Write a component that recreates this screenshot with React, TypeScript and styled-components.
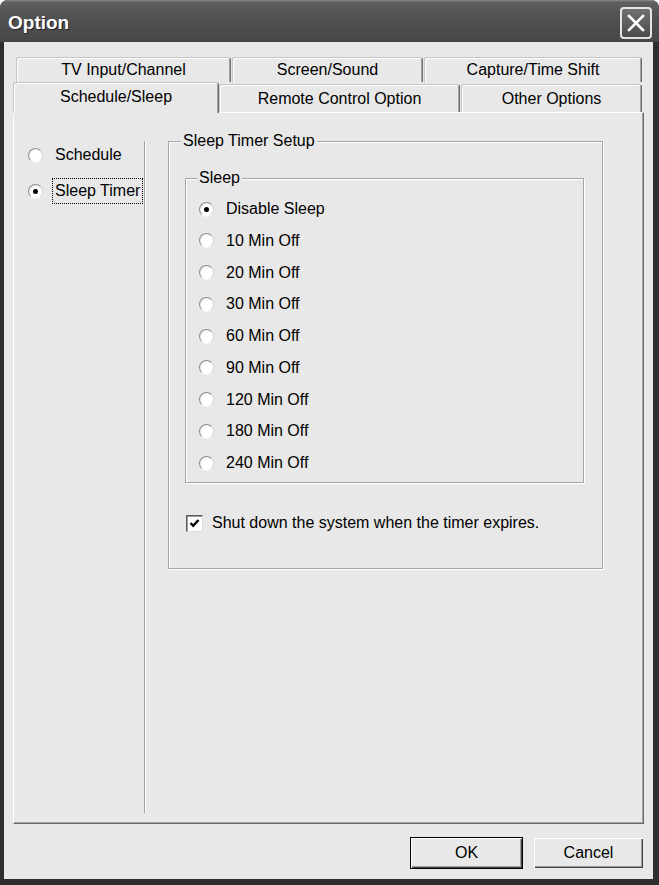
import styled, { createGlobalStyle } from "styled-components";

const FONT = `"Liberation Sans", Arial, sans-serif`;

const GlobalStyle = createGlobalStyle`
  html, body {
    margin: 0;
    padding: 0;
    background: #fff;
  }
  body {
    font-family: ${FONT};
    font-size: 16px;
    color: #000;
  }
  * {
    box-sizing: border-box;
  }
`;

const sleepOptions = [
  "Disable Sleep",
  "10 Min Off",
  "20 Min Off",
  "30 Min Off",
  "60 Min Off",
  "90 Min Off",
  "120 Min Off",
  "180 Min Off",
  "240 Min Off",
];

export default function App() {
  return (
    <>
      <GlobalStyle />
      <Window>
        <TitleBar>
          <Title>Option</Title>
          <CloseButton>
            <svg width="18" height="18" viewBox="0 0 18 18">
              <path
                d="M2 2 L16 16 M16 2 L2 16"
                stroke="#fff"
                strokeWidth="2.6"
                strokeLinecap="square"
              />
            </svg>
          </CloseButton>
        </TitleBar>
        <Frame>
          <Client>
            <BackRow>
              <Tab $w={215} $back>
                TV Input/Channel
              </Tab>
              <Tab $w={191} $back>
                Screen/Sound
              </Tab>
              <Tab $w={218} $back>
                Capture/Time Shift
              </Tab>
            </BackRow>
            <FrontRow>
              <Tab $w={206} $selected>
                Schedule/Sleep
              </Tab>
              <Tab $w={241}>Remote Control Option</Tab>
              <Tab $w={181}>Other Options</Tab>
            </FrontRow>
            <Panel>
              <SideList>
                <Option>
                  <Radio />
                  <Label>Schedule</Label>
                </Option>
                <Option>
                  <Radio $on />
                  <Label $focus>Sleep Timer</Label>
                </Option>
              </SideList>
              <Group $w={435} $h={428} $pt={36} $pl={16} $ml={23} $mt={28}>
                <Legend $left={12}>Sleep Timer Setup</Legend>
                <Group $w={399} $h={305} $pt={18} $pl={13}>
                  <Legend $left={11}>Sleep</Legend>
                  <RadioList>
                    {sleepOptions.map((label, i) => (
                      <Option key={label}>
                        <Radio $on={i === 0} />
                        <Label>{label}</Label>
                      </Option>
                    ))}
                  </RadioList>
                </Group>
                <CheckRow>
                  <CheckBox>
                    <svg width="11" height="11" viewBox="0 0 11 11">
                      <path
                        d="M1.5 5 L4.2 7.8 L9.5 2"
                        stroke="#000"
                        strokeWidth="2.4"
                        fill="none"
                      />
                    </svg>
                  </CheckBox>
                  <span>Shut down the system when the timer expires.</span>
                </CheckRow>
              </Group>
            </Panel>
            <Footer>
              <Button $w={113} $default>
                OK
              </Button>
              <Button $w={111}>Cancel</Button>
            </Footer>
          </Client>
        </Frame>
      </Window>
    </>
  );
}

const Window = styled.div`
  width: 659px;
  height: 885px;
  display: flex;
  flex-direction: column;
  background: #2e2e2e;
  border-radius: 8px 8px 0 0;
  overflow: hidden;
`;

const TitleBar = styled.div`
  height: 42px;
  flex: none;
  display: flex;
  justify-content: space-between;
  align-items: flex-start;
  padding: 0 7px 0 8px;
  background: linear-gradient(#8c8c8c 0, #616161 2px, #545454 12px, #474747 100%);
`;

const Title = styled.span`
  margin-top: 12px;
  font: bold 19px/22px ${FONT};
  color: #fff;
  text-shadow: 1px 1px 0 #1e1e1e;
`;

const CloseButton = styled.div`
  margin-top: 7px;
  width: 32px;
  height: 32px;
  display: flex;
  align-items: center;
  justify-content: center;
  border: 2px solid #e4e4e4;
  border-radius: 4px;
  background: linear-gradient(#707070, #4c4c4c);
`;

const Frame = styled.div`
  flex: 1;
  display: flex;
  padding: 0 6px 6px 4px;
`;

const Client = styled.div`
  flex: 1;
  display: flex;
  flex-direction: column;
  padding: 15px 9px 0 9px;
  background: #e8e8e8;
`;

const BackRow = styled.div`
  height: 25px;
  display: flex;
  align-items: flex-start;
  gap: 1px;
  padding-left: 3px;
`;

const FrontRow = styled.div`
  height: 30px;
  display: flex;
  align-items: flex-start;
  position: relative;
  z-index: 1;
`;

const Tab = styled.div<{ $w: number; $selected?: boolean; $back?: boolean }>`
  width: ${(p) => p.$w}px;
  height: ${(p) => (p.$selected ? 31 : p.$back ? 25 : 28)}px;
  margin-top: ${(p) => (p.$selected || p.$back ? 0 : 2)}px;
  margin-bottom: ${(p) => (p.$selected ? -1 : 0)}px;
  margin-right: ${(p) => (p.$selected || p.$back ? 0 : 1)}px;
  display: flex;
  align-items: center;
  justify-content: center;
  padding-bottom: ${(p) => (p.$selected ? 3 : p.$back ? 1 : 0)}px;
  background: #e8e8e8;
  border-top: 1px solid #c4c4c4;
  border-left: 1px solid #c4c4c4;
  border-right: 1px solid #6c6c6c;
  border-radius: 3px 3px 0 0;
  box-shadow: inset 1px 1px 0 #fff, inset -1px 0 0 #a2a2a2;
  font-size: 16px;
  line-height: 20px;
  white-space: nowrap;
`;

const Panel = styled.div`
  height: 712px;
  flex: none;
  display: flex;
  align-items: flex-start;
  border-top: 1px solid #fff;
  border-left: 1px solid #fff;
  border-right: 1px solid #6a6a6a;
  border-bottom: 1px solid #6a6a6a;
  box-shadow: inset -1px -1px 0 #a4a4a4;
`;

const SideList = styled.div`
  width: 131px;
  align-self: stretch;
  margin: 28px 0 10px 0;
  padding: 2px 0 0 14px;
  display: flex;
  flex-direction: column;
  gap: 12px;
  border-right: 1px solid #a0a0a0;
  box-shadow: 1px 0 0 #fff;
`;

const Option = styled.div`
  height: 24px;
  display: flex;
  align-items: center;
  gap: 10px;
  white-space: nowrap;
`;

const Radio = styled.span<{ $on?: boolean }>`
  width: 15px;
  height: 15px;
  flex: none;
  display: flex;
  align-items: center;
  justify-content: center;
  border-radius: 50%;
  border: 1px solid;
  border-color: #8e8e8e #d6d6d6 #f6f6f6 #8e8e8e;
  background: radial-gradient(circle at 60% 60%, #fff 50%, #e2e2e2 100%);

  &::after {
    content: "";
    width: 5px;
    height: 5px;
    border-radius: 50%;
    background: #000;
    display: ${(p) => (p.$on ? "block" : "none")};
  }
`;

const Label = styled.span<{ $focus?: boolean }>`
  padding: 1px 2px;
  line-height: 22px;
  outline: ${(p) => (p.$focus ? "1px dotted #000" : "none")};
`;

const Group = styled.div<{
  $w: number;
  $h: number;
  $pt: number;
  $pl: number;
  $ml?: number;
  $mt?: number;
}>`
  position: relative;
  width: ${(p) => p.$w}px;
  height: ${(p) => p.$h}px;
  flex: none;
  margin: ${(p) => p.$mt ?? 0}px 0 0 ${(p) => p.$ml ?? 0}px;
  padding: ${(p) => p.$pt}px 0 0 ${(p) => p.$pl}px;
  border: 1px solid #a4a4a4;
  box-shadow: inset 1px 1px 0 #fff, 1px 1px 0 #fff;
`;

const Legend = styled.span<{ $left: number }>`
  position: absolute;
  top: -12px;
  left: ${(p) => p.$left}px;
  padding: 0 2px;
  line-height: 22px;
  background: #e8e8e8;
  white-space: nowrap;
`;

const RadioList = styled.div`
  display: flex;
  flex-direction: column;
  gap: 7.75px;
`;

const CheckRow = styled.div`
  height: 22px;
  margin: 29px 0 0 1px;
  display: flex;
  align-items: center;
  gap: 9px;
  line-height: 22px;
  white-space: nowrap;
`;

const CheckBox = styled.span`
  width: 17px;
  height: 17px;
  flex: none;
  display: flex;
  align-items: center;
  justify-content: center;
  background: #fff;
  border: 1px solid;
  border-color: #5e5e5e #dcdcdc #dcdcdc #5e5e5e;
  box-shadow: inset 1px 1px 0 #9a9a9a;
`;

const Footer = styled.div`
  flex: 1;
  display: flex;
  justify-content: flex-end;
  align-items: flex-start;
  gap: 10px;
  padding-top: 13px;
`;

const Button = styled.button<{ $w: number; $default?: boolean }>`
  width: ${(p) => p.$w}px;
  height: 32px;
  padding: 0;
  font: 16px/20px ${FONT};
  color: #000;
  background: #e8e8e8;
  border: 1px solid ${(p) => (p.$default ? "#000" : "#e8e8e8")};
  box-shadow: inset 1px 1px 0 #fff, inset -1px -1px 0 #444,
    inset -2px -2px 0 #9c9c9c;
`;
